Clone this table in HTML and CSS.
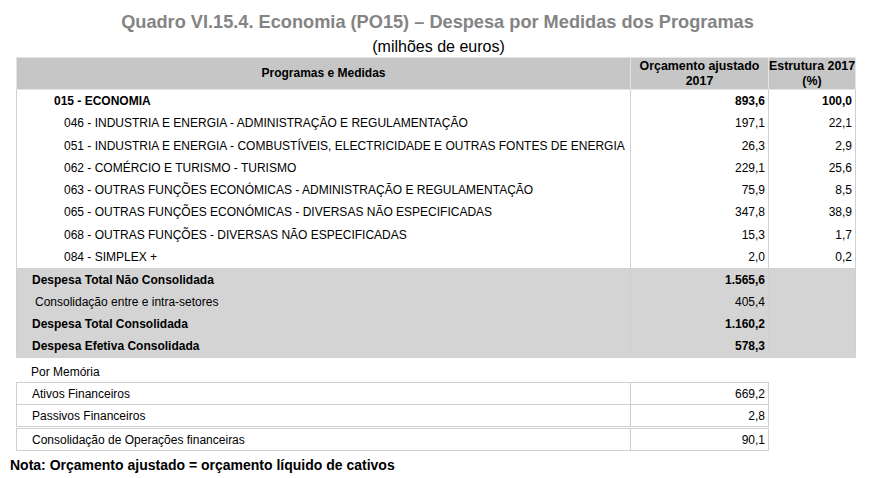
FILE: index.html
```html
<!DOCTYPE html>
<html lang="pt">
<head>
<meta charset="utf-8">
<link rel="stylesheet" href="styles.css">
</head>
<body>
<h1 class="title">Quadro VI.15.4. Economia (PO15) – Despesa por Medidas dos Programas</h1>
<div class="unit">(milhões de euros)</div>
<table class="main">
  <colgroup><col class="c1"><col class="c2"><col class="c3"></colgroup>
  <thead>
    <tr class="head">
      <th>Programas e Medidas</th>
      <th>Orçamento ajustado<br>2017</th>
      <th>Estrutura 2017<br>(%)</th>
    </tr>
  </thead>
  <tbody>
    <tr class="prog"><td class="l1">015 - ECONOMIA</td><td class="num">893,6</td><td class="num">100,0</td></tr>
    <tr><td class="l2">046 - INDUSTRIA E ENERGIA - ADMINISTRAÇÃO E REGULAMENTAÇÃO</td><td class="num">197,1</td><td class="num">22,1</td></tr>
    <tr><td class="l2">051 - INDUSTRIA E ENERGIA - COMBUSTÍVEIS, ELECTRICIDADE E OUTRAS FONTES DE ENERGIA</td><td class="num">26,3</td><td class="num">2,9</td></tr>
    <tr><td class="l2">062 - COMÉRCIO E TURISMO - TURISMO</td><td class="num">229,1</td><td class="num">25,6</td></tr>
    <tr><td class="l2">063 - OUTRAS FUNÇÕES ECONÓMICAS - ADMINISTRAÇÃO E REGULAMENTAÇÃO</td><td class="num">75,9</td><td class="num">8,5</td></tr>
    <tr><td class="l2">065 - OUTRAS FUNÇÕES ECONÓMICAS - DIVERSAS NÃO ESPECIFICADAS</td><td class="num">347,8</td><td class="num">38,9</td></tr>
    <tr><td class="l2">068 - OUTRAS FUNÇÕES - DIVERSAS NÃO ESPECIFICADAS</td><td class="num">15,3</td><td class="num">1,7</td></tr>
    <tr><td class="l2">084 - SIMPLEX +</td><td class="num">2,0</td><td class="num">0,2</td></tr>
  </tbody>
  <tbody class="totals">
    <tr class="bold"><td class="l0">Despesa Total Não Consolidada</td><td class="num">1.565,6</td><td></td></tr>
    <tr><td class="l0b">Consolidação entre e intra-setores</td><td class="num">405,4</td><td></td></tr>
    <tr class="bold"><td class="l0">Despesa Total Consolidada</td><td class="num">1.160,2</td><td></td></tr>
    <tr class="bold"><td class="l0">Despesa Efetiva Consolidada</td><td class="num">578,3</td><td></td></tr>
  </tbody>
</table>
<div class="memo-label">Por Memória</div>
<table class="memo">
  <colgroup><col class="c1"><col class="c2"></colgroup>
  <tr><td class="l0">Ativos Financeiros</td><td class="num">669,2</td></tr>
  <tr><td class="l0">Passivos Financeiros</td><td class="num">2,8</td></tr>
</table>
<table class="memo memo-last">
  <colgroup><col class="c1"><col class="c2"></colgroup>
  <tr><td class="l0">Consolidação de Operações financeiras</td><td class="num">90,1</td></tr>
</table>
<p class="note">Nota: Orçamento ajustado = orçamento líquido de cativos</p>
</body>
</html>
```

FILE: styles.css
```css
html, body {
  margin: 0;
  padding: 0;
  background: #ffffff;
}
body {
  font-family: "Liberation Sans", Arial, sans-serif;
  color: #000;
  font-size: 12px;
}
.title {
  margin: 0;
  padding-top: 11px;
  height: 24px;
  font-size: 18.2px;
  line-height: 22px;
  font-weight: bold;
  color: #848484;
  text-align: center;
}
.unit {
  height: 22px;
  font-size: 16px;
  line-height: 24px;
  text-align: center;
  padding-left: 2px;
}
table {
  border-collapse: collapse;
  table-layout: fixed;
  margin-left: 16px;
}
.main {
  width: 839px;
}
.c1 { width: 614px; }
.c2 { width: 138px; }
.c3 { width: 87px; }
td, th {
  padding: 0;
  border: 1px solid #d0d0d0;
  white-space: nowrap;
}
.main tbody td {
  border-top: none;
  border-bottom: none;
  height: 22.25px;
}
.main tbody tr:last-child td {
  border-bottom: 1px solid #d0d0d0;
}
.head th {
  background: #c6c6c6;
  height: 31px;
  font-size: 12px;
  line-height: 14.5px;
  font-weight: bold;
  text-align: center;
  border-color: #e4e4e4;
}
.head th + th {
  font-size: 12.4px;
}
.prog td {
  font-weight: bold;
}
.num {
  text-align: right;
  padding-right: 3px;
}
.l1 { padding-left: 37px; }
.l2 { padding-left: 47px; }
.l0 { padding-left: 15px; }
.l0b { padding-left: 18px; }
.main .totals td {
  background: #d4d4d4;
  height: 22px;
}
.totals tr.bold td {
  font-weight: bold;
}
.memo-label {
  margin-top: 5px;
  padding-left: 31px;
  height: 19px;
  line-height: 19px;
}
.memo {
  width: 753px;
}
.memo td {
  height: 21px;
  border: 1px solid #cfcfcf;
}
.memo-last {
  margin-top: 1px;
}
.note {
  margin: 5px 0 0 10px;
  font-size: 14px;
  font-weight: bold;
  line-height: 18px;
}
```
